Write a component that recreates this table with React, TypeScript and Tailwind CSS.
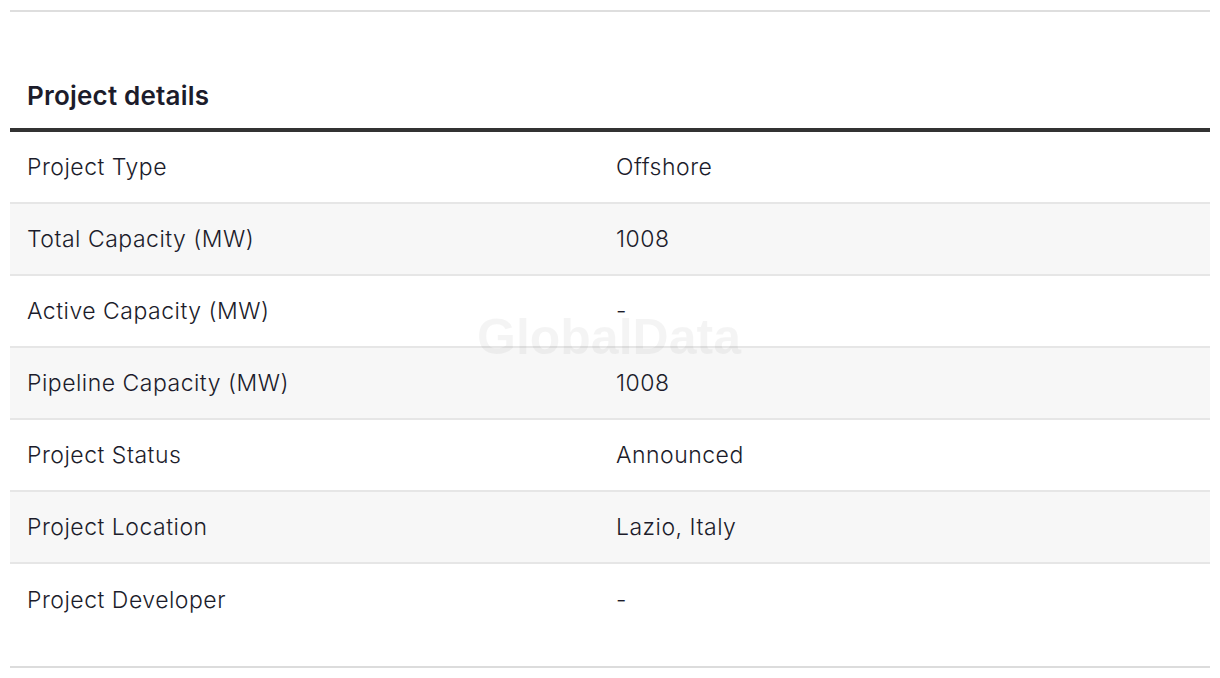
const ROWS: [string, string][] = [
  ["Project Type", "Offshore"],
  ["Total Capacity (MW)", "1008"],
  ["Active Capacity (MW)", "-"],
  ["Pipeline Capacity (MW)", "1008"],
  ["Project Status", "Announced"],
  ["Project Location", "Lazio, Italy"],
  ["Project Developer", "-"],
];

export default function App() {
  return (
    <div className="h-[678px] w-[1220px] bg-white px-[10px] pt-[10px] font-['Inter',sans-serif] text-[#1c1c2b]">
      <div className="h-[2px] bg-[#dedede]" />
      <h2 className="pl-[17px] pt-[68px] pb-[16px] text-[26px] font-semibold leading-[32px] tracking-[0.2px]">
        Project details
      </h2>
      <div className="relative border-t-4 border-[#333333]">
        {ROWS.map(([label, value], i) => (
          <div
            key={label}
            className={`grid h-[72px] grid-cols-[589px_1fr] items-center text-[23px] font-light tracking-[0.5px] ${
              i % 2 === 1 ? "bg-[#f7f7f7]" : "bg-white"
            } ${i < ROWS.length - 1 ? "border-b-2 border-[#e6e6e6]" : ""}`}
          >
            <span className="pl-[17px]">{label}</span>
            <span className="pl-[17px]">{value}</span>
          </div>
        ))}
        <div className="pointer-events-none absolute left-[467px] top-[180px] font-['Liberation_Sans',sans-serif] text-[50px] font-bold leading-none text-black/[0.045]">
          GlobalData
        </div>
      </div>
      <div className="mt-[30px] h-[2px] bg-[#dcdcdc]" />
    </div>
  );
}
